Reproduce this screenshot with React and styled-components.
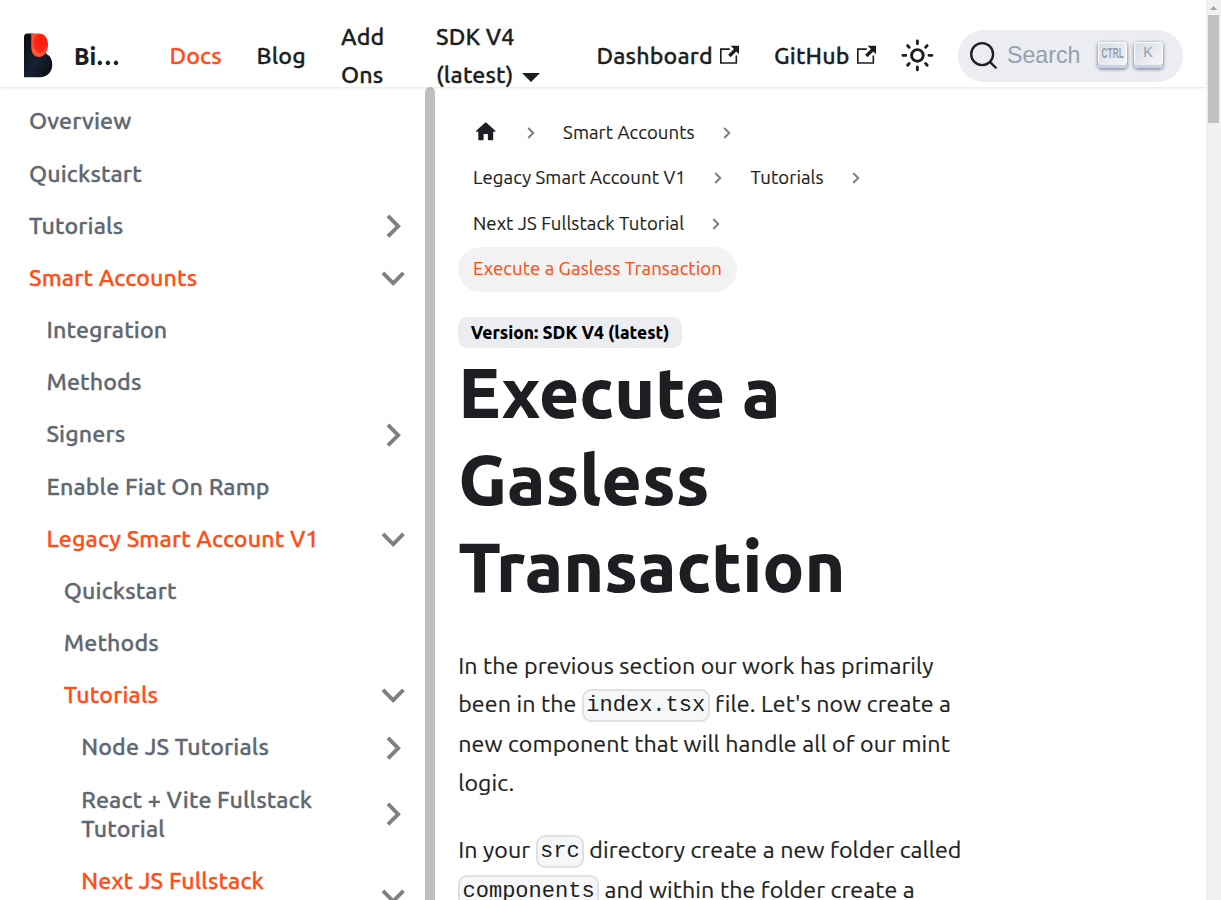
import React from 'react';
import styled, { createGlobalStyle } from 'styled-components';

const ink = '#1c1e21';
const orange = '#ff4e17';
const grey = '#606770';

const GlobalStyle = createGlobalStyle`
  *, *::before, *::after { box-sizing: border-box; }
  html, body { margin: 0; height: 100%; overflow: hidden; background: #fff; }
  body {
    color: ${ink};
    font-family: Ubuntu, "Noto Sans", "Open Sans", sans-serif;
    font-size: 23.2px;
    line-height: 38.28px;
  }
`;

const Page = styled.div`
  display: flex;
  width: 100%;
  height: 900px;
  overflow: hidden;
`;

const Site = styled.div`
  display: flex;
  flex-direction: column;
  flex: 1;
  min-width: 0;
`;

const Text = styled.span`
  white-space: nowrap;
`;

/* Navbar */
const Navbar = styled.nav`
  position: relative;
  z-index: 2;
  display: flex;
  flex: none;
  height: 87px;
  padding: 11.6px 23.2px 0 24px;
  background: #fff;
  box-shadow: 0 1px 2px rgba(0, 0, 0, 0.1);
`;

const NavInner = styled.div`
  display: flex;
  align-items: center;
  width: 100%;
  height: 88.2px;
  font-weight: 500;
`;

const NavItem = styled.a`
  display: flex;
  flex: none;
  align-items: center;
  width: ${(p) => p.$w}px;
  color: ${(p) => (p.$active ? orange : ink)};
  font-weight: ${(p) => (p.$bold ? 800 : 500)};
  letter-spacing: ${(p) => (p.$bold ? 0 : '0.006em')};
  -webkit-text-stroke: ${(p) => (p.$bold ? 0 : 0.3)}px currentColor;
  svg { flex: none; }
  > span { margin-top: ${(p) => (p.$bold ? 0 : -1.4)}px; }
`;

const NavStack = styled(NavItem)`
  flex-direction: column;
  align-items: flex-start;
  margin-top: -1.4px;
  > span { margin-top: 0; }
`;

const DropdownLine = styled.span`
  display: flex;
  align-items: center;
  &::after {
    content: '';
    margin: 6px 0 0 8px;
    border: 9.3px solid transparent;
    border-top-color: ${ink};
    border-bottom: 0;
  }
`;

const ExternalSvg = styled.svg`
  width: 19.6px;
  height: 19.6px;
  margin: -2px 0 0 7px;
`;

const SearchButton = styled.button`
  display: flex;
  flex: none;
  align-items: center;
  width: 225px;
  height: 52px;
  padding: 0 0 0 10.5px;
  border: 0;
  border-radius: 40px;
  background: #ebedf0;
  color: #969faf;
  font: 400 23.2px "Liberation Sans", Arial, sans-serif;
`;

const SearchLabel = styled.span`
  width: 100.5px;
  padding-left: 9.5px;
  text-align: left;
`;

const Key = styled.kbd`
  display: flex;
  flex: none;
  align-items: center;
  justify-content: center;
  width: 29px;
  height: 26px;
  margin: -2px 6.5px 0 0;
  padding-bottom: ${(p) => (p.$narrow ? 3 : 5)}px;
  border-radius: 4px;
  background: linear-gradient(-225deg, #d5dbe4, #f8f8f8);
  box-shadow: inset 0 -3px 0 0 #cdcde6, inset 0 0 1px 1px #fff, 0 1px 3px 1px rgba(30, 35, 90, 0.42);
  color: #969faf;
  font: ${(p) => (p.$narrow ? '700 15.5px' : '400 14.5px')} "Liberation Sans", Arial, sans-serif;
  span { transform: ${(p) => (p.$narrow ? 'scaleX(0.54)' : 'none')}; }
`;

/* Body */
const Columns = styled.div`
  display: flex;
  flex: 1;
  min-height: 0;
`;

const Sidebar = styled.aside`
  flex: none;
  width: 425px;
  padding: 11.6px;
  overflow: hidden;
`;

const SidebarThumb = styled.div`
  flex: none;
  width: 10px;
  border-radius: 5px 5px 0 0;
  background: #bfbfbf;
`;

const Menu = styled.ul`
  display: flex;
  flex-direction: column;
  gap: 5.8px;
  margin: 0;
  padding: 0;
  list-style: none;
`;

const MenuRow = styled.li`
  display: flex;
  align-items: center;
  padding: 8.7px 0 8.7px ${(p) => 17.4 * (p.$level + 1)}px;
  color: ${(p) => (p.$active ? orange : grey)};
  font-weight: 500;
  line-height: 29px;
`;

const MenuLabel = styled.span`
  display: flex;
  flex: 1;
  flex-direction: column;
  align-items: flex-start;
  margin: -0.9px 0 0.9px;
  letter-spacing: 0.006em;
  -webkit-text-stroke: 0.3px currentColor;
`;

const CaretSlot = styled.span`
  display: flex;
  justify-content: center;
  align-items: center;
  width: 40px;
  height: 29px;
  svg {
    flex: none;
    width: 46.4px;
    height: 46.4px;
    transform: rotate(${(p) => (p.$open ? 180 : 90)}deg);
  }
`;

const Main = styled.main`
  flex: 1;
  padding: 23.2px 23.2px 0;
  overflow: hidden;
`;

const Breadcrumbs = styled.ul`
  display: flex;
  flex-wrap: wrap;
  width: 530px;
  margin: 0 0 24.8px;
  padding: 0;
  list-style: none;
  font-size: 18.56px;
  line-height: 30.6px;
  letter-spacing: 0.005em;
  -webkit-text-stroke: 0.15px currentColor;
`;

const Crumb = styled.li`
  display: flex;
  align-items: center;
  height: 45.5px;
`;

const CrumbLink = styled.a`
  display: flex;
  align-items: center;
  height: 45px;
  padding: 0 14.8px;
  border-radius: 30px;
  background: ${(p) => (p.$active ? '#f2f2f2' : 'transparent')};
  color: ${(p) => (p.$active ? orange : ink)};
`;

const CrumbSeparator = styled.svg`
  width: 12px;
  height: 14px;
  margin: 0 11.5px;
`;

const HomeSvg = styled.svg`
  width: 25.5px;
  height: 25.5px;
  margin-top: -2px;
`;

const Badge = styled.span`
  display: flex;
  align-items: center;
  width: 224px;
  height: 31px;
  padding: 1px 0 0 12.5px;
  border-radius: 9px;
  background: #ebedf0;
  color: #000;
  font-size: 17.4px;
  font-weight: 800;
`;

const Title = styled.h1`
  display: flex;
  flex-direction: column;
  align-items: flex-start;
  margin: 0 0 35.8px;
  padding-top: 0.8px;
  font-size: 69.6px;
  font-weight: 800;
  line-height: 87px;
`;

const Paragraph = styled.p`
  margin: 0 0 28.9px;
  letter-spacing: 0.005em;
  -webkit-text-stroke: 0.2px currentColor;
`;

const Line = styled.span`
  display: block;
  height: ${(p) => (p.$tall ? 40.6 : 38.28)}px;
  white-space: nowrap;
`;

const Code = styled.code`
  display: inline-block;
  position: relative;
  top: -1px;
  height: 33px;
  margin: -4px 0;
  padding: 0 2.3px;
  border: 2px solid #dfe0e1;
  border-radius: 9px;
  background: #f6f7f8;
  font-family: "Liberation Mono", monospace;
  font-size: 22.04px;
  line-height: 29px;
  letter-spacing: 0;
  -webkit-text-stroke: 0;
`;

/* Window scrollbar */
const ScrollTrack = styled.div`
  display: flex;
  flex: none;
  flex-direction: column;
  align-items: center;
  width: 15px;
  background: #f1f1f1;
  svg { width: 15px; height: 15px; }
`;

const ScrollThumb = styled.div`
  width: 11px;
  height: 108px;
  background: #c1c1c1;
`;

const Logo = () => (
  <svg width="29" height="45" viewBox="0 0 29 45">
    <defs>
      <linearGradient id="body" x1="0" y1="0" x2="1" y2="1">
        <stop offset="0" stopColor="#0b0d12" />
        <stop offset="0.55" stopColor="#172133" />
        <stop offset="1" stopColor="#090a0f" />
      </linearGradient>
      <radialGradient id="flame" cx="0.65" cy="0.4" r="0.7">
        <stop offset="0" stopColor="#ff1c10" />
        <stop offset="0.5" stopColor="#ff2413" />
        <stop offset="0.8" stopColor="#ff5a38" />
        <stop offset="1" stopColor="#f02a10" />
      </radialGradient>
    </defs>
    <path d="M0 4Q0 .5 3.500 .5H9L22 20.500Q28.300 24 28.300 31.500C28.300 39 23 44.300 16 44.300H0Z" fill="url(#body)" />
    <path d="M5.500 .5H15C20.500 .5 24 5 24 11.500C24 19 20 24 15 24C10 24 7.300 20.500 7.300 15V4.500C7.300 2.500 6.700 1.200 5.500 .5Z" fill="url(#flame)" />
    <path d="M9 16C10 20.500 13 22 16 21.200C19.500 20.300 21.500 17.500 22 14" fill="none" stroke="#ff7350" strokeWidth="1.200" opacity=".8" />
  </svg>
);

const ExternalIcon = () => (
  <ExternalSvg viewBox="0 0 24 24">
    <path fill="currentColor" d="M21 13v10h-21v-19h12v2h-10v15h17v-8h2zm3-12h-10.988l4.035 4-6.977 7.070 2.828 2.828 6.977-7.070 4.125 4.172v-11z" />
  </ExternalSvg>
);

const SunIcon = () => (
  <svg width="34.8" height="34.8" viewBox="0 0 24 24" fill="none" stroke="currentColor" strokeWidth="2" strokeLinecap="round">
    <circle cx="12" cy="12" r="4" />
    <path d="M2 12h2M20 12h2M12 2v2M12 20v2M5.285 5.285l1.060 1.060M17.655 17.655l1.060 1.060M18.715 5.285l-1.060 1.060M6.345 17.655l-1.060 1.060" />
  </svg>
);

const SearchIcon = () => (
  <svg width="29" height="29" viewBox="0 0 20 20">
    <path
      d="M14.386 14.386l4.0877 4.0877-4.0877-4.0877c-2.9418 2.9419-7.7115 2.9419-10.6533 0-2.9419-2.9418-2.9419-7.7115 0-10.6533 2.9418-2.9419 7.7115-2.9419 10.6533 0 2.9419 2.9418 2.9419 7.7115 0 10.6533z"
      stroke={ink} strokeWidth="1.6" fill="none" strokeLinecap="round" strokeLinejoin="round"
    />
  </svg>
);

const Caret = ({ open }) => (
  <CaretSlot $open={open}>
    <svg viewBox="0 0 24 24">
      <path fill="#808080" d="M7.410 15.410L12 10.830l4.590 4.580L18 14l-6-6-6 6z" />
    </svg>
  </CaretSlot>
);

const HomeIcon = () => (
  <HomeSvg viewBox="0 0 24 24">
    <path fill="currentColor" d="M10 19v-5h4v5c0 .55.45 1 1 1h3c.55 0 1-.45 1-1v-7h1.7c.46 0 .68-.57.33-.87L12.670 3.600c-.38-.34-.96-.34-1.340 0l-8.360 7.530c-.34.3-.13.87.33.87H5v7c0 .55.45 1 1 1h3c.55 0 1-.45 1-1z" />
  </HomeSvg>
);

const Separator = () => (
  <CrumbSeparator viewBox="0 0 12 14">
    <path d="M3.200 2l5 5-5 5" fill="none" stroke="#808080" strokeWidth="2" />
  </CrumbSeparator>
);

const menu = [
  { level: 0, lines: ['Overview'] },
  { level: 0, lines: ['Quickstart'] },
  { level: 0, lines: ['Tutorials'], caret: 'closed' },
  { level: 0, lines: ['Smart Accounts'], caret: 'open', active: true },
  { level: 1, lines: ['Integration'] },
  { level: 1, lines: ['Methods'] },
  { level: 1, lines: ['Signers'], caret: 'closed' },
  { level: 1, lines: ['Enable Fiat On Ramp'] },
  { level: 1, lines: ['Legacy Smart Account V1'], caret: 'open', active: true },
  { level: 2, lines: ['Quickstart'] },
  { level: 2, lines: ['Methods'] },
  { level: 2, lines: ['Tutorials'], caret: 'open', active: true },
  { level: 3, lines: ['Node JS Tutorials'], caret: 'closed' },
  { level: 3, lines: ['React + Vite Fullstack', 'Tutorial'], caret: 'closed' },
  { level: 3, lines: ['Next JS Fullstack', 'Tutorial'], caret: 'open', active: true },
];

const crumbs = ['Smart Accounts', 'Legacy Smart Account V1', 'Tutorials', 'Next JS Fullstack Tutorial'];

export default function App() {
  return (
    <>
      <GlobalStyle />
      <Page>
        <Site>
          <Navbar>
            <NavInner>
              <NavItem $w={50}><Logo /></NavItem>
              <NavItem $w={95.5} $bold><Text>Bi…</Text></NavItem>
              <NavItem $w={87} $active><Text>Docs</Text></NavItem>
              <NavItem $w={84.5}><Text>Blog</Text></NavItem>
              <NavStack $w={95}><Text>Add</Text><Text>Ons</Text></NavStack>
              <NavStack $w={160.5}>
                <Text>SDK V4</Text>
                <DropdownLine><Text>(latest)</Text></DropdownLine>
              </NavStack>
              <NavItem $w={177.5}><Text>Dashboard</Text><ExternalIcon /></NavItem>
              <NavItem $w={126}><Text>GitHub</Text><ExternalIcon /></NavItem>
              <NavItem $w={58}><SunIcon /></NavItem>
              <SearchButton>
                <SearchIcon />
                <SearchLabel>Search</SearchLabel>
                <Key $narrow><span>CTRL</span></Key>
                <Key><span>K</span></Key>
              </SearchButton>
            </NavInner>
          </Navbar>
          <Columns>
            <Sidebar>
              <Menu>
                {menu.map((item, i) => (
                  <MenuRow key={i} $level={item.level} $active={item.active}>
                    <MenuLabel>
                      {item.lines.map((text) => <Text key={text}>{text}</Text>)}
                    </MenuLabel>
                    {item.caret && <Caret open={item.caret === 'open'} />}
                  </MenuRow>
                ))}
              </Menu>
            </Sidebar>
            <SidebarThumb />
            <Main>
              <Breadcrumbs>
                <Crumb><CrumbLink><HomeIcon /></CrumbLink><Separator /></Crumb>
                {crumbs.map((text) => (
                  <Crumb key={text}><CrumbLink><Text>{text}</Text></CrumbLink><Separator /></Crumb>
                ))}
                <Crumb><CrumbLink $active><Text>Execute a Gasless Transaction</Text></CrumbLink></Crumb>
              </Breadcrumbs>
              <Badge><Text>Version: SDK V4 (latest)</Text></Badge>
              <Title>
                <Text>Execute a</Text>
                <Text>Gasless</Text>
                <Text>Transaction</Text>
              </Title>
              <Paragraph>
                <Line>In the previous section our work has primarily</Line>
                <Line $tall>been in the <Code>index.tsx</Code> file. Let's now create a</Line>
                <Line>new component that will handle all of our mint</Line>
                <Line>logic.</Line>
              </Paragraph>
              <Paragraph>
                <Line $tall>In your <Code>src</Code> directory create a new folder called</Line>
                <Line $tall><Code>components</Code> and within the folder create a</Line>
              </Paragraph>
            </Main>
          </Columns>
        </Site>
        <ScrollTrack>
          <svg viewBox="0 0 15 15"><path d="M4 10l3.500-4 3.500 4z" fill="#a3a3a3" /></svg>
          <ScrollThumb />
        </ScrollTrack>
      </Page>
    </>
  );
}
